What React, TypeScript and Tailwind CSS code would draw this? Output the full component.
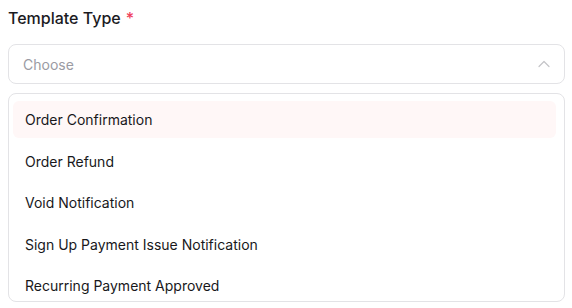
import React from "react";

const items = [
  "Order Confirmation",
  "Order Refund",
  "Void Notification",
  "Sign Up Payment Issue Notification",
  "Recurring Payment Approved",
];

export default function App() {
  return (
    <div className="w-[572px] h-[308px] bg-white px-2 pt-[7px]" style={{ fontFamily: "Inter, 'Noto Sans', sans-serif" }}>
      <div className="flex items-center gap-[5px] h-[22px] text-[16px] font-medium text-[#1b1b1f]">
        <span>Template Type</span>
        <span className="text-[#ef3e5c]">*</span>
      </div>
      <div className="mt-[15px] h-[40px] w-[557px] rounded-lg border border-[#e3e3e6] flex items-center justify-between pl-[14px] pr-[13px]">
        <span className="text-[14px] text-[#9b9ba3]">Choose</span>
        <svg width="14" height="14" viewBox="0 0 14 14" fill="none" stroke="#c4c4c8" strokeWidth="1.2" strokeLinecap="round" strokeLinejoin="round">
          <path d="M2 9.5 L7 4.5 L12 9.5" />
        </svg>
      </div>
      <div className="mt-[9px] h-[209px] w-[557px] rounded-lg border border-[#e3e3e6] overflow-hidden pt-[7px] pl-1 pr-2">
        <div className="flex flex-col gap-[4.5px]">
          {items.map((it, i) => (
            <div
              key={it}
              className={`h-[37px] shrink-0 flex items-center pl-3 rounded-md text-[14px] text-[#18181b] ${i === 0 ? "bg-[#fff7f7]" : ""}`}
            >
              {it}
            </div>
          ))}
        </div>
      </div>
    </div>
  );
}
